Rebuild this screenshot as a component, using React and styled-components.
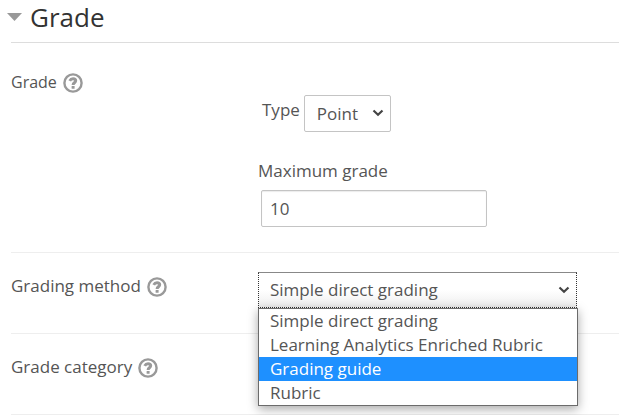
import React, { useState } from "react";
import styled, { createGlobalStyle } from "styled-components";

const textColor = "#555";
const iconColor = "#999";
const borderColor = "#c4c4c4";
const highlight = "#1e90ff";

const methods = [
  "Simple direct grading",
  "Learning Analytics Enriched Rubric",
  "Grading guide",
  "Rubric"
];

const GlobalStyle = createGlobalStyle`
  * {
    box-sizing: border-box;
  }

  body {
    margin: 0;
    overflow-x: hidden;
    background: #fff;
    color: ${textColor};
    font-family: "Open Sans", sans-serif;
    font-size: 17px;
    line-height: 24px;
  }
`;

const Section = styled.form`
  padding-left: 11px;
`;

const SectionHeader = styled.h2`
  margin: 0;
  padding-bottom: 8px;
  border-bottom: 1px solid #ddd;
  font-size: 26px;
  font-weight: 400;
  line-height: 34px;
`;

const Toggle = styled.button`
  display: flex;
  align-items: center;
  gap: 8px;
  margin-left: -4px;
  padding: 0;
  border: 0;
  background: none;
  color: #333;
  font: inherit;
  cursor: pointer;

  svg {
    display: block;
    fill: ${iconColor};
  }
`;

const Row = styled.div`
  display: grid;
  grid-template-columns: 247px 1fr;
  padding: ${props => (props.$tall ? "27px 0 25px" : "19px 0 24px")};
  border-bottom: 1px solid #eee;
`;

const RowLabel = styled.div`
  display: flex;
  align-items: flex-start;
  gap: 6px;
  min-height: 37px;
  padding-top: ${props => (props.$offset ? "2px" : "0")};
  font-size: ${props => (props.$offset ? "17px" : "16px")};
`;

const HelpButton = styled.button`
  display: block;
  margin-top: 3px;
  padding: 0;
  border: 0;
  background: none;
  color: ${iconColor};
  cursor: help;

  svg {
    display: block;
  }
`;

const Fields = styled.div`
  display: flex;
  flex-direction: column;
  align-items: flex-start;
`;

const InlineField = styled.div`
  display: flex;
  gap: 4px;
  padding: 25px 0 27px 4px;

  label {
    padding-top: 3px;
  }
`;

const TextInput = styled.input`
  width: 226px;
  height: 37px;
  margin: 7px 0 0 3px;
  padding: 4px 8px;
  border: 1px solid ${borderColor};
  border-radius: 2px;
  box-shadow: inset 0 1px 1px rgba(0, 0, 0, 0.08);
  color: inherit;
  font: inherit;
`;

const SelectWrap = styled.div`
  position: relative;
  width: ${props => props.$width};

  > svg {
    position: absolute;
    top: 14px;
    right: 7px;
    pointer-events: none;
  }
`;

const Select = styled.select`
  display: block;
  width: 100%;
  height: 37px;
  padding: 4px 28px 4px 12px;
  border: 1px solid ${borderColor};
  border-radius: 2px;
  outline: 0;
  appearance: none;
  background: #fff;
  color: inherit;
  font: inherit;
  ${props =>
    props.$open &&
    `
    height: 36px;
    padding: 3px 28px 4px 11px;
    border-color: #888 #333 #333;
    border-style: solid dotted dotted;
    border-radius: 0;
    background: linear-gradient(#fff 50%, #eee);
  `}
`;

const Menu = styled.ul`
  position: absolute;
  z-index: 1;
  top: 100%;
  left: 0;
  width: 320px;
  margin: -1px 0 0;
  padding: 0;
  border: 1px solid #6b6b6b;
  background: #fff;
  box-shadow: 0 3px 10px rgba(0, 0, 0, 0.35);
  list-style: none;
`;

const Option = styled.li`
  padding: 0 11px;
  background: ${props => (props.$active ? highlight : "transparent")};
  color: ${props => (props.$active ? "#fff" : "inherit")};
  cursor: default;
`;

const Chevron = () => (
  <svg width="12" height="8" viewBox="0 0 12 8" aria-hidden="true">
    <path d="M1.5 1.5 6 5.7l4.5-4.2" fill="none" stroke="#444" strokeWidth="2.2" />
  </svg>
);

const HelpIcon = () => (
  <svg width="20" height="20" viewBox="0 0 20 20" fill="none" aria-hidden="true">
    <circle cx="10" cy="10" r="8.6" stroke="currentColor" strokeWidth="2.4" />
    <path
      d="M6.7 7.9C7.5 6.4 8.6 5.8 10 5.8c1.6 0 2.7.9 2.7 2 0 1.9-2.6 2-2.6 4.1"
      stroke="currentColor"
      strokeWidth="3"
    />
    <rect x="8.6" y="13" width="3" height="2.8" rx=".5" fill="currentColor" />
  </svg>
);

const FieldLabel = ({ htmlFor, offset, children }) => (
  <RowLabel $offset={offset}>
    {htmlFor ? <label htmlFor={htmlFor}>{children}</label> : <span>{children}</span>}
    <HelpButton type="button" aria-label={"Help with " + children}>
      <HelpIcon />
    </HelpButton>
  </RowLabel>
);

const App = () => {
  const [method, setMethod] = useState(methods[0]);
  const [active, setActive] = useState("Grading guide");

  return (
    <Section>
      <GlobalStyle />
      <SectionHeader>
        <Toggle type="button" aria-expanded="true">
          <svg width="15" height="8" viewBox="0 0 15 8" aria-hidden="true">
            <path d="M0 0h15L7.5 8z" />
          </svg>
          Grade
        </Toggle>
      </SectionHeader>

      <Row $tall>
        <FieldLabel>Grade</FieldLabel>
        <Fields>
          <InlineField>
            <label htmlFor="type">Type</label>
            <SelectWrap $width="87px">
              <Select id="type">
                <option>Point</option>
              </Select>
              <Chevron />
            </SelectWrap>
          </InlineField>
          <label htmlFor="maximum">Maximum grade</label>
          <TextInput id="maximum" type="text" defaultValue="10" />
        </Fields>
      </Row>

      <Row>
        <FieldLabel htmlFor="method" offset>Grading method</FieldLabel>
        <SelectWrap $width="319px">
          <Select
            id="method"
            $open
            value={method}
            onChange={e => setMethod(e.target.value)}
          >
            {methods.map(m => (
              <option key={m}>{m}</option>
            ))}
          </Select>
          <Chevron />
          <Menu role="listbox" aria-label="Grading method">
            {methods.map(m => (
              <Option
                key={m}
                role="option"
                aria-selected={m === method}
                $active={m === active}
                onMouseEnter={() => setActive(m)}
                onClick={() => setMethod(m)}
              >
                {m}
              </Option>
            ))}
          </Menu>
        </SelectWrap>
      </Row>

      <Row>
        <FieldLabel htmlFor="category" offset>Grade category</FieldLabel>
        <SelectWrap $width="174px">
          <Select id="category" />
        </SelectWrap>
      </Row>
    </Section>
  );
};

export default App;
